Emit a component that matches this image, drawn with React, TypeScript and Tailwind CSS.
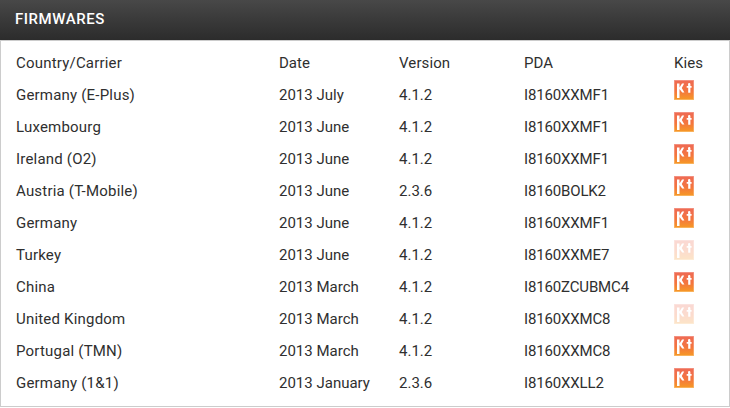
const rows = [
  { country: "Germany (E-Plus)", date: "2013 July", version: "4.1.2", pda: "I8160XXMF1", kies: true },
  { country: "Luxembourg", date: "2013 June", version: "4.1.2", pda: "I8160XXMF1", kies: true },
  { country: "Ireland (O2)", date: "2013 June", version: "4.1.2", pda: "I8160XXMF1", kies: true },
  { country: "Austria (T-Mobile)", date: "2013 June", version: "2.3.6", pda: "I8160BOLK2", kies: true },
  { country: "Germany", date: "2013 June", version: "4.1.2", pda: "I8160XXMF1", kies: true },
  { country: "Turkey", date: "2013 June", version: "4.1.2", pda: "I8160XXME7", kies: false },
  { country: "China", date: "2013 March", version: "4.1.2", pda: "I8160ZCUBMC4", kies: true },
  { country: "United Kingdom", date: "2013 March", version: "4.1.2", pda: "I8160XXMC8", kies: false },
  { country: "Portugal (TMN)", date: "2013 March", version: "4.1.2", pda: "I8160XXMC8", kies: true },
  { country: "Germany (1&1)", date: "2013 January", version: "2.3.6", pda: "I8160XXLL2", kies: true },
]

function KiesIcon({ active }: { active: boolean }) {
  const id = active ? "kies-on" : "kies-off"
  return (
    <svg width="20" height="20" viewBox="0 0 20 20" className={active ? "" : "opacity-25"}>
      <defs>
        <linearGradient id={id} x1="0" y1="0" x2="0" y2="1">
          <stop offset="0" stopColor="#ee6a55" />
          <stop offset="0.55" stopColor="#f4753f" />
          <stop offset="1" stopColor="#f69a24" />
        </linearGradient>
      </defs>
      <rect width="20" height="20" rx="1" fill={`url(#${id})`} />
      <rect x="0.5" y="0.5" width="19" height="19" rx="1" fill="none" stroke="#fff" strokeOpacity="0.25" />
      <path d="M3 3.5h2.5V18H3z M5.5 7.4 8 3.5h2.2L7.8 8l2.6 4.6H8.2L5.5 9z" fill="#fff" />
      <path d="M14 4.2a1.2 1.2 0 0 1 2.4 0v1.7h1.2v1.8h-1.2v5h-2.2v-5h-1.5V5.9h1.5z" fill="#fff" />
    </svg>
  )
}

const gridCols = "grid grid-cols-[263px_120px_125px_150px_1fr] items-center h-8"

export default function App() {
  return (
    <div className="w-[730px] h-[408px] bg-white font-['Roboto',sans-serif] text-[15px] text-[#2f2f2f]">
      <div className="flex h-10 items-center bg-gradient-to-b from-[#484848] to-[#2c2c2c] px-[15px] pb-[2px]">
        <h2 className="text-[15px] font-medium tracking-[0.55px] text-white">FIRMWARES</h2>
      </div>
      <div className="h-[367px] border border-[#cccccc] pl-[15px] pt-[6px]">
        <div className={gridCols}>
          <span className="tracking-[0.2px]">Country/Carrier</span>
          <span>Date</span>
          <span className="tracking-[0.1px]">Version</span>
          <span>PDA</span>
          <span className="tracking-[0.1px]">Kies</span>
        </div>
        {rows.map((r, i) => (
          <div key={i} className={gridCols}>
            <span className="tracking-[0.2px]">{r.country}</span>
            <span>{r.date}</span>
            <span>{r.version}</span>
            <span className="tracking-[-0.15px]">{r.pda}</span>
            <span className="-mt-[10px]">
              <KiesIcon active={r.kies} />
            </span>
          </div>
        ))}
      </div>
    </div>
  )
}
